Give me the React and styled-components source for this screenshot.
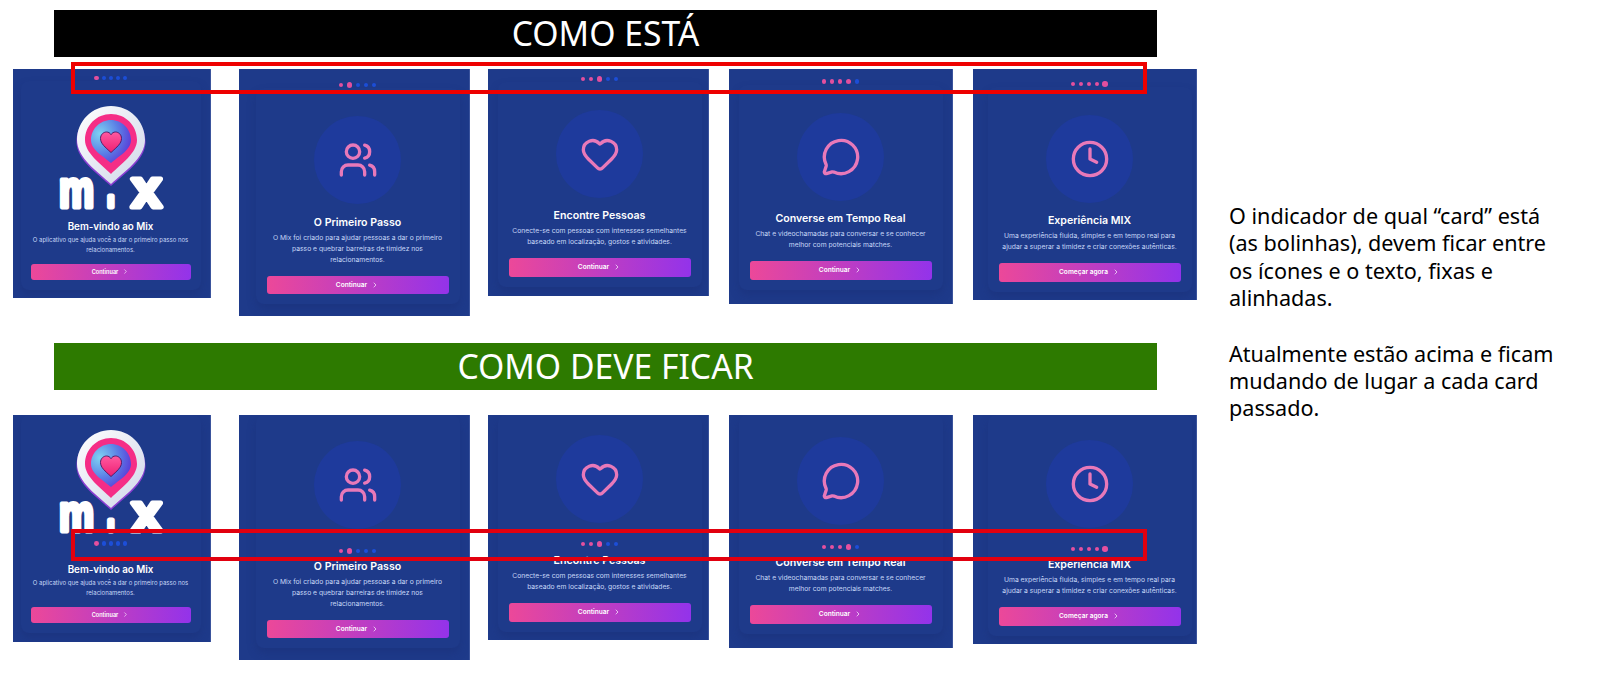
import React from "react";
import styled, { createGlobalStyle } from "styled-components";
import { Users, Heart, MessageCircle, Clock, ChevronRight } from "lucide-react";

const Global = createGlobalStyle`
  html, body { margin: 0; padding: 0; background: #fff; }
  body { width: 1600px; height: 688px; overflow: hidden; }
`;

const Page = styled.div`
  display: flex;
  align-items: flex-start;
  width: 1600px;
  height: 688px;
`;
const Board = styled.main`
  width: 1197px;
  padding-top: 10px;
  flex: none;
`;
const Banner = styled.h2`
  margin: ${(p) => p.$top}px 0 0 54px;
  width: 1103px;
  height: 47px;
  display: flex;
  align-items: center;
  justify-content: center;
  background: ${(p) => p.$bg};
  color: #fff;
  font: 400 ${(p) => p.$size}px/47px "Noto Sans", sans-serif;
`;
const Row = styled.section`
  position: relative;
  display: flex;
  align-items: flex-start;
  margin: ${(p) => p.$top}px 0 0 13px;
  height: ${(p) => p.$height}px;
`;
const Frame = styled.div`
  position: absolute;
  z-index: 2;
  box-sizing: border-box;
  left: 58px;
  width: 1076px;
  top: ${(p) => p.$top}px;
  height: 32px;
  border: 4px solid ${(p) => p.$color};
`;
const Card = styled.article`
  box-sizing: border-box;
  flex: none;
  display: flex;
  flex-direction: column;
  align-items: center;
  overflow: hidden;
  width: ${(p) => p.$w}px;
  height: ${(p) => p.$h}px;
  margin-left: ${(p) => p.$gap}px;
  padding: ${(p) => p.$pad}px ${(p) => p.$pr}px 0 ${(p) => p.$pl}px;
  background: #1e3a8a;
  border-right: 1px solid #3a539c;
`;
const Panel = styled.div`
  display: flex;
  flex-direction: column;
  align-items: center;
  width: ${(p) => (p.$small ? 180 : 204)}px;
  padding-bottom: 10px;
  border-radius: 8px;
  box-shadow: 0 5px 9px rgba(24, 46, 115, 0.4);
`;
const DotRow = styled.div`
  display: flex;
  align-items: center;
  justify-content: center;
  height: 6px;
  gap: ${(p) => (p.$small ? 2.8 : 3.5)}px;
  margin-top: ${(p) => p.$top || 0}px;
`;
const Dot = styled.span`
  flex: none;
  border-radius: 50%;
  width: ${(p) => (p.$state === "active" ? (p.$small ? 4.8 : 5.5) : 4.3)}px;
  height: ${(p) => (p.$state === "active" ? (p.$small ? 4.8 : 5.5) : 4.3)}px;
  background: ${(p) => (p.$state === "pending" ? "#1d4ed8" : "#e5509f")};
`;
const IconDisc = styled.div`
  flex: none;
  display: flex;
  align-items: center;
  justify-content: center;
  width: 87px;
  height: 88px;
  margin-top: ${(p) => p.$top}px;
  border-radius: 50%;
  background: #1e3a9c;
  color: #e879b9;
`;
const LogoBox = styled.svg`
  flex: none;
  display: block;
  width: 106px;
  height: 103px;
  margin-top: ${(p) => p.$top}px;
  overflow: visible;
`;
const Title = styled.h3`
  margin: ${(p) => p.$top}px 0 0;
  color: #fff;
  font: 600 ${(p) => (p.$small ? 9.8 : 10.6)}px/14px Inter, "Noto Sans", sans-serif;
  white-space: nowrap;
`;
const Desc = styled.p`
  margin: ${(p) => (p.$small ? 1.5 : 3)}px 0 0;
  color: #c7d7f7;
  text-align: center;
  white-space: nowrap;
  font: 400 ${(p) => (p.$small ? 6 : 6.75)}px/${(p) => (p.$small ? 9.7 : 10.8)}px Inter, "Noto Sans", sans-serif;
`;
const Cta = styled.button`
  flex: none;
  display: flex;
  align-items: center;
  justify-content: center;
  gap: 4px;
  border: 0;
  padding: 0;
  border-radius: 3px;
  width: ${(p) => (p.$small ? 160 : 182)}px;
  height: ${(p) => (p.$small ? 16 : 18.5)}px;
  margin-top: ${(p) => (p.$small ? 9.3 : 10.6)}px;
  background: linear-gradient(90deg, #ec4899, #9333ea);
  color: #fff;
  font: 600 ${(p) => (p.$small ? 5.6 : 6.6)}px Inter, "Noto Sans", sans-serif;
`;
const Notes = styled.aside`
  flex: none;
  width: 370px;
  margin: 202px 0 0 32px;
  color: #000;
  font: 400 21.6px/27.4px "Noto Sans", sans-serif;
`;
const Note = styled.p`
  margin: 0 0 28px;
  white-space: nowrap;
`;

const Logo = ({ top, id }) => (
  <LogoBox $top={top} viewBox="0 0 106 103" role="img" aria-label="Mix">
    <defs>
      <radialGradient id={`lens${id}`} cx="22%" cy="32%" r="85%">
        <stop offset="0" stopColor="#7fd3f2" />
        <stop offset="0.55" stopColor="#5b7fe6" />
        <stop offset="1" stopColor="#5a36d6" />
      </radialGradient>
      <linearGradient id={`shell${id}`} x1="0" y1="0" x2="1" y2="1">
        <stop offset="0" stopColor="#ffffff" />
        <stop offset="1" stopColor="#cfd6e8" />
      </linearGradient>
      <linearGradient id={`love${id}`} x1="0" y1="0" x2="0" y2="1">
        <stop offset="0" stopColor="#ff5aa0" />
        <stop offset="1" stopColor="#ee1f72" />
      </linearGradient>
    </defs>
    <text fill="#fff" stroke="#fff" strokeWidth="5" strokeLinejoin="round" fontFamily="'Liberation Sans', sans-serif" fontWeight="700">
      <tspan x="1" y="100.5" fontSize="52" textLength="35" lengthAdjust="spacingAndGlyphs">m</tspan>
      <tspan x="50" y="100.5" fontSize="20">ı</tspan>
      <tspan x="73.5" y="100.5" fontSize="54">x</tspan>
    </text>
    <path d="M53 2 C72 2 87.5 17 87.5 36 C87.5 54 66 68 53 80 C40 68 18.5 54 18.5 36 C18.5 17 34 2 53 2Z" fill="#8a3fd2" />
    <path d="M53 0 C72 0 87 15 87 34 C87 52 66 66 53 78 C40 66 19 52 19 34 C19 15 34 0 53 0Z" fill={`url(#shell${id})`} />
    <path d="M53 8 C67.5 8 79 19.5 79 34 C79 47 63 58 53 68 C43 58 27 47 27 34 C27 19.5 38.5 8 53 8Z" fill="#f52d86" />
    <path d="M53 14 C64 14 73 23 73 34 C73 44 61 50 53 57 C45 50 33 44 33 34 C33 23 42 14 53 14Z" fill={`url(#lens${id})`} />
    <path d="M53 46.5 C47 41 42.5 37.5 42.5 32.5 C42.5 28.5 45.5 26 48.5 26 C50.5 26 52 27 53 28.7 C54 27 55.5 26 57.5 26 C60.5 26 63.5 28.5 63.5 32.5 C63.5 37.5 59 41 53 46.5Z" fill={`url(#love${id})`} stroke="#4a1560" strokeWidth="0.9" />
  </LogoBox>
);

const Dots = ({ step, small, top }) => (
  <DotRow $small={small} $top={top}>
    {[0, 1, 2, 3, 4].map((i) => (
      <Dot key={i} $small={small} $state={i === step ? "active" : i < step ? "done" : "pending"} />
    ))}
  </DotRow>
);

const cards = [
  {
    w: 198, gap: 0, pl: 0, pr: 2, small: true, title: "Bem-vindo ao Mix", cta: "Continuar",
    lines: ["O aplicativo que ajuda você a dar o primeiro passo nos", "relacionamentos."],
    top: { h: 229, pad: 6, lead: 24.5, tt: 11 },
    bottom: { h: 227, pad: 15, dots: 7.5, tt: 16 },
  },
  {
    w: 231, gap: 28, pl: 7, pr: 0, Icon: Users, title: "O Primeiro Passo", cta: "Continuar",
    lines: ["O Mix foi criado para ajudar pessoas a dar o primeiro", "passo e quebrar barreiras de timidez nos", "relacionamentos."],
    top: { h: 247, pad: 13, lead: 28, tt: 12 },
    bottom: { h: 245, pad: 26, dots: 19, tt: 6 },
  },
  {
    w: 221, gap: 18, pl: 3, pr: 0, Icon: Heart, title: "Encontre Pessoas", cta: "Continuar",
    lines: ["Conecte-se com pessoas com interesses semelhantes", "baseado em localização, gostos e atividades."],
    top: { h: 227, pad: 7, lead: 28, tt: 11 },
    bottom: { h: 225, pad: 20, dots: 18, tt: 7 },
  },
  {
    w: 224, gap: 20, pl: 0, pr: 0, Icon: MessageCircle, title: "Converse em Tempo Real", cta: "Continuar",
    lines: ["Chat e videochamadas para conversar e se conhecer", "melhor com potenciais matches."],
    top: { h: 235, pad: 9.5, lead: 28.5, tt: 11 },
    bottom: { h: 233, pad: 22, dots: 19, tt: 6 },
  },
  {
    w: 224, gap: 20, pl: 10, pr: 0, Icon: Clock, title: "Experiência MIX", cta: "Começar agora",
    lines: ["Uma experiência fluida, simples e em tempo real para", "ajudar a superar a timidez e criar conexões autênticas."],
    top: { h: 231, pad: 12, lead: 28, tt: 11 },
    bottom: { h: 229, pad: 25, dots: 18, tt: 6 },
  },
];

const Copy = ({ card }) => (
  <>
    <Desc $small={card.small}>
      {card.lines.map((line, i) => (
        <React.Fragment key={line}>
          {i > 0 && <br />}
          {line}
        </React.Fragment>
      ))}
    </Desc>
    <Cta $small={card.small}>
      {card.cta}
      <ChevronRight size={card.small ? 7 : 8} strokeWidth={2} />
    </Cta>
  </>
);

const Visual = ({ card, top, id }) =>
  card.Icon ? (
    <IconDisc $top={top}>
      <card.Icon size={40} strokeWidth={2} />
    </IconDisc>
  ) : (
    <Logo top={top} id={id} />
  );

const CurrentCard = ({ card, step }) => {
  const s = card.top;
  return (
    <Card $w={card.w} $h={s.h} $gap={card.gap} $pad={s.pad} $pl={card.pl} $pr={card.pr}>
      <Dots step={step} small={card.small} />
      <Panel $small={card.small}>
        <Visual card={card} top={s.lead} id="a" />
        <Title $small={card.small} $top={s.tt}>{card.title}</Title>
        <Copy card={card} />
      </Panel>
    </Card>
  );
};

const FixedCard = ({ card, step }) => {
  const s = card.bottom;
  return (
    <Card $w={card.w} $h={s.h} $gap={card.gap} $pad={0} $pl={card.pl} $pr={card.pr}>
      <Panel $small={card.small}>
        <Visual card={card} top={s.pad} id="b" />
        <Dots step={step} small={card.small} top={s.dots} />
        <Title $small={card.small} $top={s.tt}>{card.title}</Title>
        <Copy card={card} />
      </Panel>
    </Card>
  );
};

export default function App() {
  return (
    <Page>
      <Global />
      <Board>
        <Banner $top={0} $bg="#000" $size={33.7}>COMO ESTÁ</Banner>
        <Row $top={12} $height={247}>
          <Frame $top={-7} $color="#ee0000" />
          {cards.map((c, i) => (
            <CurrentCard key={c.title} card={c} step={i} />
          ))}
        </Row>
        <Banner $top={27} $bg="#2d7a00" $size={33.7}>COMO DEVE FICAR</Banner>
        <Row $top={25} $height={245}>
          <Frame $top={114} $color="#e2000f" />
          {cards.map((c, i) => (
            <FixedCard key={c.title} card={c} step={i} />
          ))}
        </Row>
      </Board>
      <Notes>
        <Note>
          O indicador de qual “card” está
          <br />
          (as bolinhas), devem ficar entre
          <br />
          os ícones e o texto, fixas e
          <br />
          alinhadas.
        </Note>
        <Note>
          Atualmente estão acima e ficam
          <br />
          mudando de lugar a cada card
          <br />
          passado.
        </Note>
      </Notes>
    </Page>
  );
}
